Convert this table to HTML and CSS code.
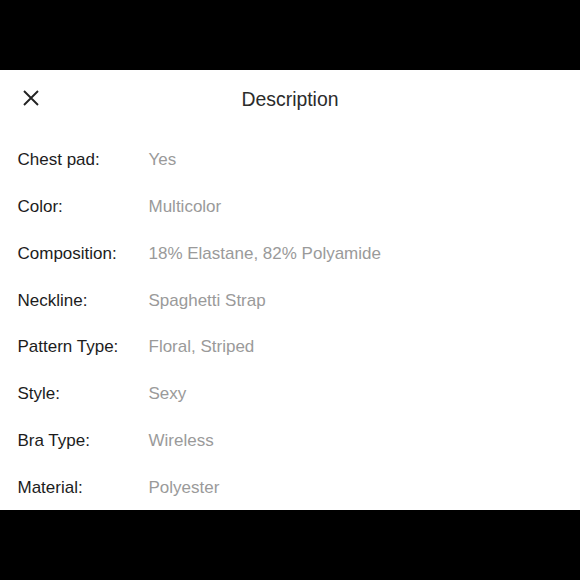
FILE: index.html
```html
<!DOCTYPE html>
<html>
<head>
<meta charset="utf-8">
<link rel="stylesheet" href="styles.css">
</head>
<body>
<div class="panel">
  <header class="header">
    <span class="close">
      <svg width="16" height="16" viewBox="0 0 16 16"><path d="M1 1 L15 15 M15 1 L1 15" stroke="#222" stroke-width="1.9" fill="none" stroke-linecap="butt"/></svg>
    </span>
    <h1 class="title">Description</h1>
  </header>
  <div class="list">
    <div class="label">Chest pad:</div><div class="value">Yes</div>
    <div class="label">Color:</div><div class="value">Multicolor</div>
    <div class="label">Composition:</div><div class="value">18% Elastane, 82% Polyamide</div>
    <div class="label">Neckline:</div><div class="value">Spaghetti Strap</div>
    <div class="label">Pattern Type:</div><div class="value">Floral, Striped</div>
    <div class="label">Style:</div><div class="value">Sexy</div>
    <div class="label">Bra Type:</div><div class="value">Wireless</div>
    <div class="label">Material:</div><div class="value">Polyester</div>
  </div>
</div>
</body>
</html>
```

FILE: styles.css
```css
html, body {
  margin: 0;
  padding: 0;
  background: #000;
  height: 100%;
}
body {
  font-family: "Liberation Sans", Arial, sans-serif;
}
.panel {
  margin-top: 70px;
  background: #fff;
  height: 439.5px;
  overflow: hidden;
}
.header {
  position: relative;
  height: 59px;
  display: flex;
  align-items: center;
  justify-content: center;
}
.close {
  position: absolute;
  left: 22.5px;
  top: 19.5px;
  width: 16px;
  height: 16px;
  display: block;
}
.close svg {
  display: block;
}
.title {
  margin: 0;
  font-size: 19.4px;
  font-weight: normal;
  color: #2b2b2b;
  line-height: 59px;
}
.list {
  padding-top: 8.4px;
  display: grid;
  grid-template-columns: 131px 1fr;
  grid-auto-rows: 46.75px;
  padding-left: 17.5px;
  font-size: 17px;
}
.label, .value {
  line-height: 46.75px;
  white-space: nowrap;
}
.label {
  color: #1c1c1c;
}
.value {
  color: #9a9a9a;
}
```
